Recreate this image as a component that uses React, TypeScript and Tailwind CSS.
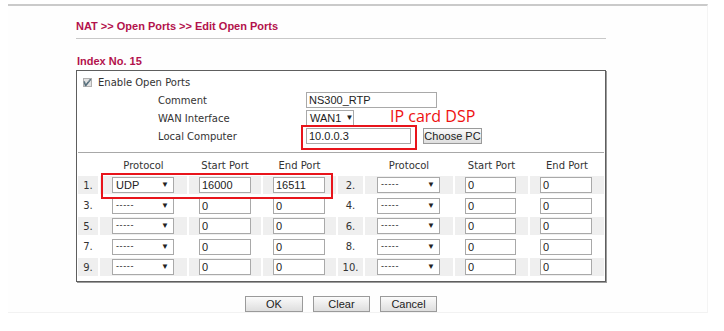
import React from "react";

const LEFT_ROWS = [
  { n: "1.", proto: "UDP", start: "16000", end: "16511" },
  { n: "3.", proto: "-----", start: "0", end: "0" },
  { n: "5.", proto: "-----", start: "0", end: "0" },
  { n: "7.", proto: "-----", start: "0", end: "0" },
  { n: "9.", proto: "-----", start: "0", end: "0" },
];
const RIGHT_ROWS = ["2.", "4.", "6.", "8.", "10."];

const label = "font-['DejaVu_Sans',sans-serif] text-[10px] text-[#333]";
const field = "font-['Liberation_Sans',Arial,sans-serif] text-[11px] text-[#222]";

function TextBox({ value, w }: { value: string; w: string }) {
  return (
    <div className={`${w} h-[16px] border border-[#a9a9a9] bg-white pl-[2px] leading-[14px] ${field}`}>
      {value}
    </div>
  );
}

function Dropdown({ value, w }: { value: string; w: string }) {
  const dashes = value === "-----";
  return (
    <div className={`${w} h-[16px] border border-[#a9a9a9] bg-white flex items-center justify-between gap-[4px] pl-[3px] pr-[4px] ${field}`}>
      <span className={dashes ? "text-[9px] tracking-[0.6px]" : ""}>{value}</span>
      <span className="text-[8px] leading-none">▼</span>
    </div>
  );
}

function Btn({ children, w }: { children: React.ReactNode; w: string }) {
  return (
    <div
      className={`${w} h-[16px] border border-[#9a9a9a] bg-gradient-to-b from-[#fbfbfb] to-[#dedede] flex items-center justify-center ${field} text-[#111]`}
    >
      {children}
    </div>
  );
}

export default function App() {
  return (
    <div className="w-[724px] h-[331px] bg-white overflow-hidden">
      <div className="ml-[8px] mt-[4px] w-[700px] h-[309px] border-t-2 border-t-[#cacaca] border-b border-b-[#f2f2f2] border-r border-r-[#f4f4f4] bg-[#fefefe]">
        <div className="ml-[68px] w-[530px] relative">
          <div className="pt-[13px] h-[32px] font-['Liberation_Sans',Arial,sans-serif] font-bold text-[11px] leading-[14px] text-[#b3124c]">
            NAT &gt;&gt; Open Ports &gt;&gt; Edit Open Ports
          </div>
          <div className="h-[1px] bg-[#c8c8c8]" />
          <div className="mt-[15px] pl-[1px] h-[14px] font-['Liberation_Sans',Arial,sans-serif] font-bold text-[11px] leading-[14px] text-[#b3124c]">
            Index No. 15
          </div>
          <div className="mt-[2px] h-[212px] border border-[#5e5e5e] shadow-[1px_1px_0_#9c9c9c] bg-white">
            <div className="pt-[3px]">
              <div className="h-[17px] flex items-center pl-[6px] gap-[6px]">
                <div className="w-[9px] h-[9px] border border-[#b0b0b0] bg-[#e2e2e2] flex items-center justify-center text-[7px] leading-none text-[#555]">
                  ✔
                </div>
                <span className={label}>Enable Open Ports</span>
              </div>
              <div className="grid grid-cols-[148px_1fr] pl-[81px]">
                <div className={`h-[18px] flex items-center ${label}`}>Comment</div>
                <div className="h-[18px] flex items-center">
                  <TextBox value="NS300_RTP" w="w-[131px]" />
                </div>
                <div className={`h-[18px] flex items-center ${label}`}>WAN Interface</div>
                <div className="h-[18px] flex items-center">
                  <Dropdown value="WAN1" w="w-[48px]" />
                </div>
                <div className={`h-[18px] flex items-center ${label}`}>Local Computer</div>
                <div className="h-[18px] flex items-center gap-[12px]">
                  <TextBox value="10.0.0.3" w="w-[105px]" />
                  <Btn w="w-[59px]">Choose PC</Btn>
                </div>
              </div>
            </div>
            <div className="mt-[7px] mx-[1px] h-[1px] bg-[#a8a8a8]" />
            <div className="pl-[1px] pr-[1px]">
              <div className={`grid grid-cols-[20px_87px_72px_73px_25px_88px_73px_74px] gap-x-[2px] h-[23px] pt-[6px] leading-[14px] ${label}`}>
                <div />
                <div className="text-center">Protocol</div>
                <div className="text-center">Start Port</div>
                <div className="text-center">End Port</div>
                <div />
                <div className="text-center">Protocol</div>
                <div className="text-center">Start Port</div>
                <div className="text-center">End Port</div>
              </div>
              <div className="grid grid-cols-[20px_87px_72px_73px_25px_88px_73px_74px] gap-x-[2px] gap-y-[2.5px]">
                {LEFT_ROWS.map((r, i) => {
                  const bg = i % 2 === 0 ? "bg-[#efefef]" : "bg-white";
                  return (
                    <React.Fragment key={r.n}>
                      <div className={`h-[18px] ${bg} flex items-center justify-center ${label}`}>{r.n}</div>
                      <div className={`h-[18px] ${bg} flex items-center pl-[12px]`}>
                        <Dropdown value={r.proto} w="w-[62px]" />
                      </div>
                      <div className={`h-[18px] ${bg} flex items-center pl-[10px]`}>
                        <TextBox value={r.start} w="w-[52px]" />
                      </div>
                      <div className={`h-[18px] ${bg} flex items-center pl-[10px]`}>
                        <TextBox value={r.end} w="w-[52px]" />
                      </div>
                      <div className={`h-[18px] ${bg} flex items-center justify-center ${label}`}>{RIGHT_ROWS[i]}</div>
                      <div className={`h-[18px] ${bg} flex items-center pl-[12px]`}>
                        <Dropdown value="-----" w="w-[63px]" />
                      </div>
                      <div className={`h-[18px] ${bg} flex items-center pl-[10px]`}>
                        <TextBox value="0" w="w-[51px]" />
                      </div>
                      <div className={`h-[18px] ${bg} flex items-center pl-[10px]`}>
                        <TextBox value="0" w="w-[52px]" />
                      </div>
                    </React.Fragment>
                  );
                })}
              </div>
            </div>
          </div>
          <div className="mt-[14px] flex justify-center gap-[10px]">
            <Btn w="w-[58px]">OK</Btn>
            <Btn w="w-[57px]">Clear</Btn>
            <Btn w="w-[57px]">Cancel</Btn>
          </div>

          {/* annotations */}
          <div className="absolute left-[314px] top-[100px] font-['Open_Sans',sans-serif] text-[16px] leading-[20px] text-[#ee1111]">
            IP card DSP
          </div>
          <div className="absolute left-[225px] top-[119px] w-[116px] h-[25px] border-2 border-[#e8141b]" />
          <div className="absolute left-[25px] top-[167px] w-[232px] h-[26px] border-2 border-[#e8141b]" />
        </div>
      </div>
    </div>
  );
}
